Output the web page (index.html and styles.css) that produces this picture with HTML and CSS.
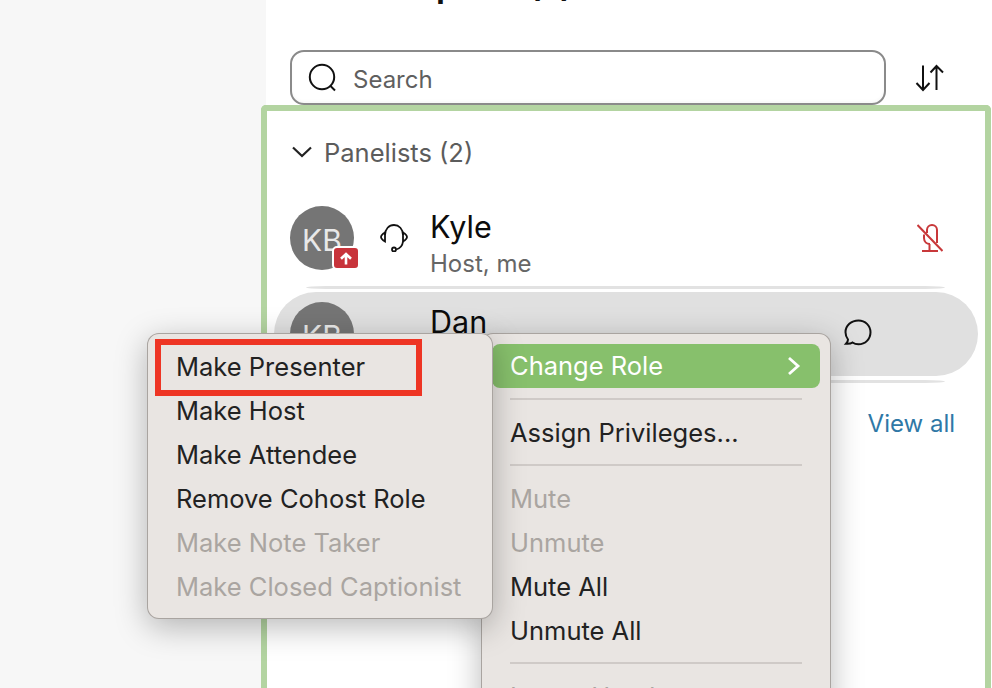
FILE: index.html
```html
<!DOCTYPE html>
<html lang="en">
<head>
<meta charset="utf-8">
<title>Participants</title>
<link rel="stylesheet" href="styles.css">
</head>
<body>
<div class="page">
  <div class="side"></div>
  <main class="main">
    <h1 class="title">Participants (2)</h1>
    <div class="toolbar">
      <div class="search">
        <svg class="search-icon" width="30" height="30" viewBox="0 0 30 30" fill="none" stroke="#111" stroke-width="2"><circle cx="14" cy="14" r="12.200"/><path d="M22.500 23l4.500 4.500"/></svg>
        <span class="search-text">Search</span>
      </div>
      <svg class="sort" width="32" height="28" viewBox="0 0 32 28" fill="none" stroke="#111" stroke-width="2"><path d="M9 1.500v24M2.500 19l6.500 7 6.500-7M22.500 26V2M16.500 8.500L22.500 2l6.500 6.500"/></svg>
    </div>
    <section class="panel">
      <div class="group-head">
        <svg width="22" height="12" viewBox="0 0 22 12" fill="none" stroke="#222" stroke-width="2.200"><path d="M2 1.500l9 8.500 9-8.500"/></svg>
        <span>Panelists (2)</span>
      </div>
      <div class="person person-kyle">
        <div class="avatar">KB
          <span class="badge"><svg width="14" height="13" viewBox="0 0 14 13" fill="none" stroke="#fff" stroke-width="2.600"><path d="M7 12.500V3M2 6.800L7 2l5 4.800"/></svg></span>
        </div>
        <svg class="headset" width="28" height="28" viewBox="0 0 28 28" fill="none" stroke="#111" stroke-width="1.800"><path d="M5 11C5 5 9 1 14 1s9 4 9 10"/><path d="M5 8.500C2.500 10 1 11.500 1 13s1.500 3 4 4.500zM23 8.500c2.500 1.500 4 3 4 4.500s-1.500 3-4 4.500z"/><path d="M23 17.500c-.5 4-3 7-6.800 8"/><circle cx="14" cy="25.500" r="2"/></svg>
        <div class="names">
          <div class="name">Kyle</div>
          <div class="role">Host, me</div>
        </div>
        <svg class="muted" width="26" height="28" viewBox="0 0 26 28" fill="none" stroke="#c8383a" stroke-width="2"><path d="M10 9V6a5 5 0 0 1 10 0v13M7 10.500V14c0 4 3 6 6 6M12.500 20v7M5 27h16M.5 1l25 26"/></svg>
      </div>
      <div class="rule"></div>
      <div class="person person-dan">
        <div class="avatar">KB</div>
        <div class="names">
          <div class="name">Dan</div>
        </div>
        <svg class="chat" width="30" height="30" viewBox="0 0 30 30" fill="none" stroke="#111" stroke-width="2"><path d="M15.500 2.500c6.700 0 12 5 12 11.800s-5.300 12-12 12c-2.700 0-4.600-.8-6-1.800-1.500 1.200-3.700 1.500-6.500 1.300 1.300-1.300 2-2.700 2-4.300-1.600-2.100-2.500-4.500-2.500-7.200 0-6.800 5.800-11.800 13-11.800z"/></svg>
      </div>
      <div class="rule rule-low"></div>
      <div class="view-all">View all</div>
    </section>
  </main>
</div>

<div class="menu menu-main">
  <div class="item item-active"><span>Change Role</span>
    <svg width="14" height="20" viewBox="0 0 14 20" fill="none" stroke="#fff" stroke-width="2.800"><path d="M2 2l9 8-9 8"/></svg>
  </div>
  <div class="sep"></div>
  <div class="item">Assign Privileges...</div>
  <div class="sep"></div>
  <div class="item item-off">Mute</div>
  <div class="item item-off">Unmute</div>
  <div class="item">Mute All</div>
  <div class="item">Unmute All</div>
  <div class="sep"></div>
  <div class="item item-off">Lower Hand</div>
</div>

<div class="menu menu-sub">
  <div class="item">Make Presenter</div>
  <div class="item">Make Host</div>
  <div class="item">Make Attendee</div>
  <div class="item">Remove Cohost Role</div>
  <div class="item item-off">Make Note Taker</div>
  <div class="item item-off">Make Closed Captionist</div>
</div>

<div class="callout"></div>
</body>
</html>
```
FILE: styles.css
```css
* { box-sizing: border-box; }
html, body { margin: 0; padding: 0; }
body {
  width: 992px;
  height: 688px;
  overflow: hidden;
  position: relative;
  background: #f7f7f7;
  font-family: Inter, "Noto Sans", sans-serif;
  color: #111;
}
.page { display: flex; height: 688px; overflow: hidden; }
.side { width: 266px; flex: none; }
.main { flex: 1; background: #fff; display: flex; flex-direction: column; min-width: 0; }
.title {
  margin: -31px 0 0 73px;
  height: 81px;
  font-size: 31px;
  line-height: 36px;
  font-weight: 700;
  color: #111;
}
.toolbar { display: flex; align-items: center; padding-left: 24px; height: 55px; flex: none; }
.search {
  width: 596px;
  height: 55px;
  border: 2px solid #8a8a8a;
  border-radius: 14px;
  background: #fff;
  display: flex;
  align-items: center;
  padding-left: 16px;
  box-shadow: inset 0 -2px 3px rgba(0,0,0,.03);
}
.search-icon { flex: none; }
.search-text { margin: 4px 0 0 15px; font-size: 24px; color: #5f5f5f; }
.sort { margin-left: 28px; margin-top: 1px; flex: none; }
.panel {
  margin-left: -5px;
  margin-right: 1px;
  flex: 1;
  border: 6px solid #b3d4a1;
  border-bottom: 0;
  border-radius: 5px 5px 0 0;
  padding: 0 7px;
  background: #fff;
}
.group-head {
  display: flex;
  align-items: center;
  height: 30px;
  margin: 26px 0 0 17px;
  font-size: 25.5px;
  color: #5c5c5c;
}
.group-head span { margin-left: 11px; }
.person { display: flex; align-items: center; position: relative; }
.person-kyle { height: 84px; margin-top: 29px; padding-left: 16px; }
.rule {
  height: 3px;
  margin: 6px 33px 3px 32px;
  background: #e2e2e2;
  border-radius: 40px / 3px;
}
.rule-low { margin-top: 4px; margin-bottom: 0; }
.person-dan {
  height: 84px;
  padding-left: 16px;
  background: #e0e0e0;
  border-radius: 42px;
}
.avatar {
  width: 64px;
  height: 64px;
  flex: none;
  border-radius: 50%;
  background: #757575;
  color: #e8e8e8;
  font-size: 30px;
  padding-top: 3px;
  display: flex;
  align-items: center;
  justify-content: center;
  position: relative;
}
.badge {
  position: absolute;
  left: 42px;
  top: 40px;
  width: 28px;
  height: 24px;
  border: 2px solid #fff;
  border-radius: 5px;
  background: #c8343b;
  display: flex;
  align-items: center;
  justify-content: center;
}
.headset { margin-left: 26px; flex: none; }
.names { margin: 12px 0 0 22px; flex: 1; }
.person-dan .names { margin-left: 76px; align-self: flex-start; margin-top: 12px; }
.name { font-size: 30.5px; line-height: 36px; color: #0c0c0c; }
.role { font-size: 24px; line-height: 30px; margin-top: 4px; color: #666; }
.muted { margin-right: 35px; flex: none; }
.chat { margin-right: 105px; margin-top: -2px; flex: none; }
.view-all {
  margin: 26px 23px 0 0;
  text-align: right;
  font-size: 24px;
  line-height: 30px;
  color: #2f78a6;
}
.menu {
  position: absolute;
  background: #e9e5e2;
  border: 1px solid rgba(90,85,80,.45);
  box-shadow: 0 8px 32px rgba(0,0,0,.28);
  font-size: 25.5px;
  color: #222;
}
.menu-main {
  left: 481px;
  top: 333px;
  width: 350px;
  height: 420px;
  border-radius: 12px;
  padding: 10px 10px 0;
  line-height: 46px;
}
.menu-sub {
  left: 147px;
  top: 333px;
  width: 346px;
  height: 286px;
  border-radius: 12px;
  padding: 11px 10px 0;
  line-height: 44px;
}
.item {
  height: 44px;
  padding-left: 18px;
  white-space: nowrap;
}
.item-off { color: #aaa5a1; }
.item-active {
  background: #87c06c;
  color: #fff;
  border-radius: 8px;
  display: flex;
  align-items: center;
  justify-content: space-between;
  padding-right: 19px;
}
.sep { height: 2px; margin: 10px 18px; background: #cfcac7; }
.callout {
  position: absolute;
  left: 155px;
  top: 339px;
  width: 267px;
  height: 57px;
  border: 6px solid #ee3524;
}
```
